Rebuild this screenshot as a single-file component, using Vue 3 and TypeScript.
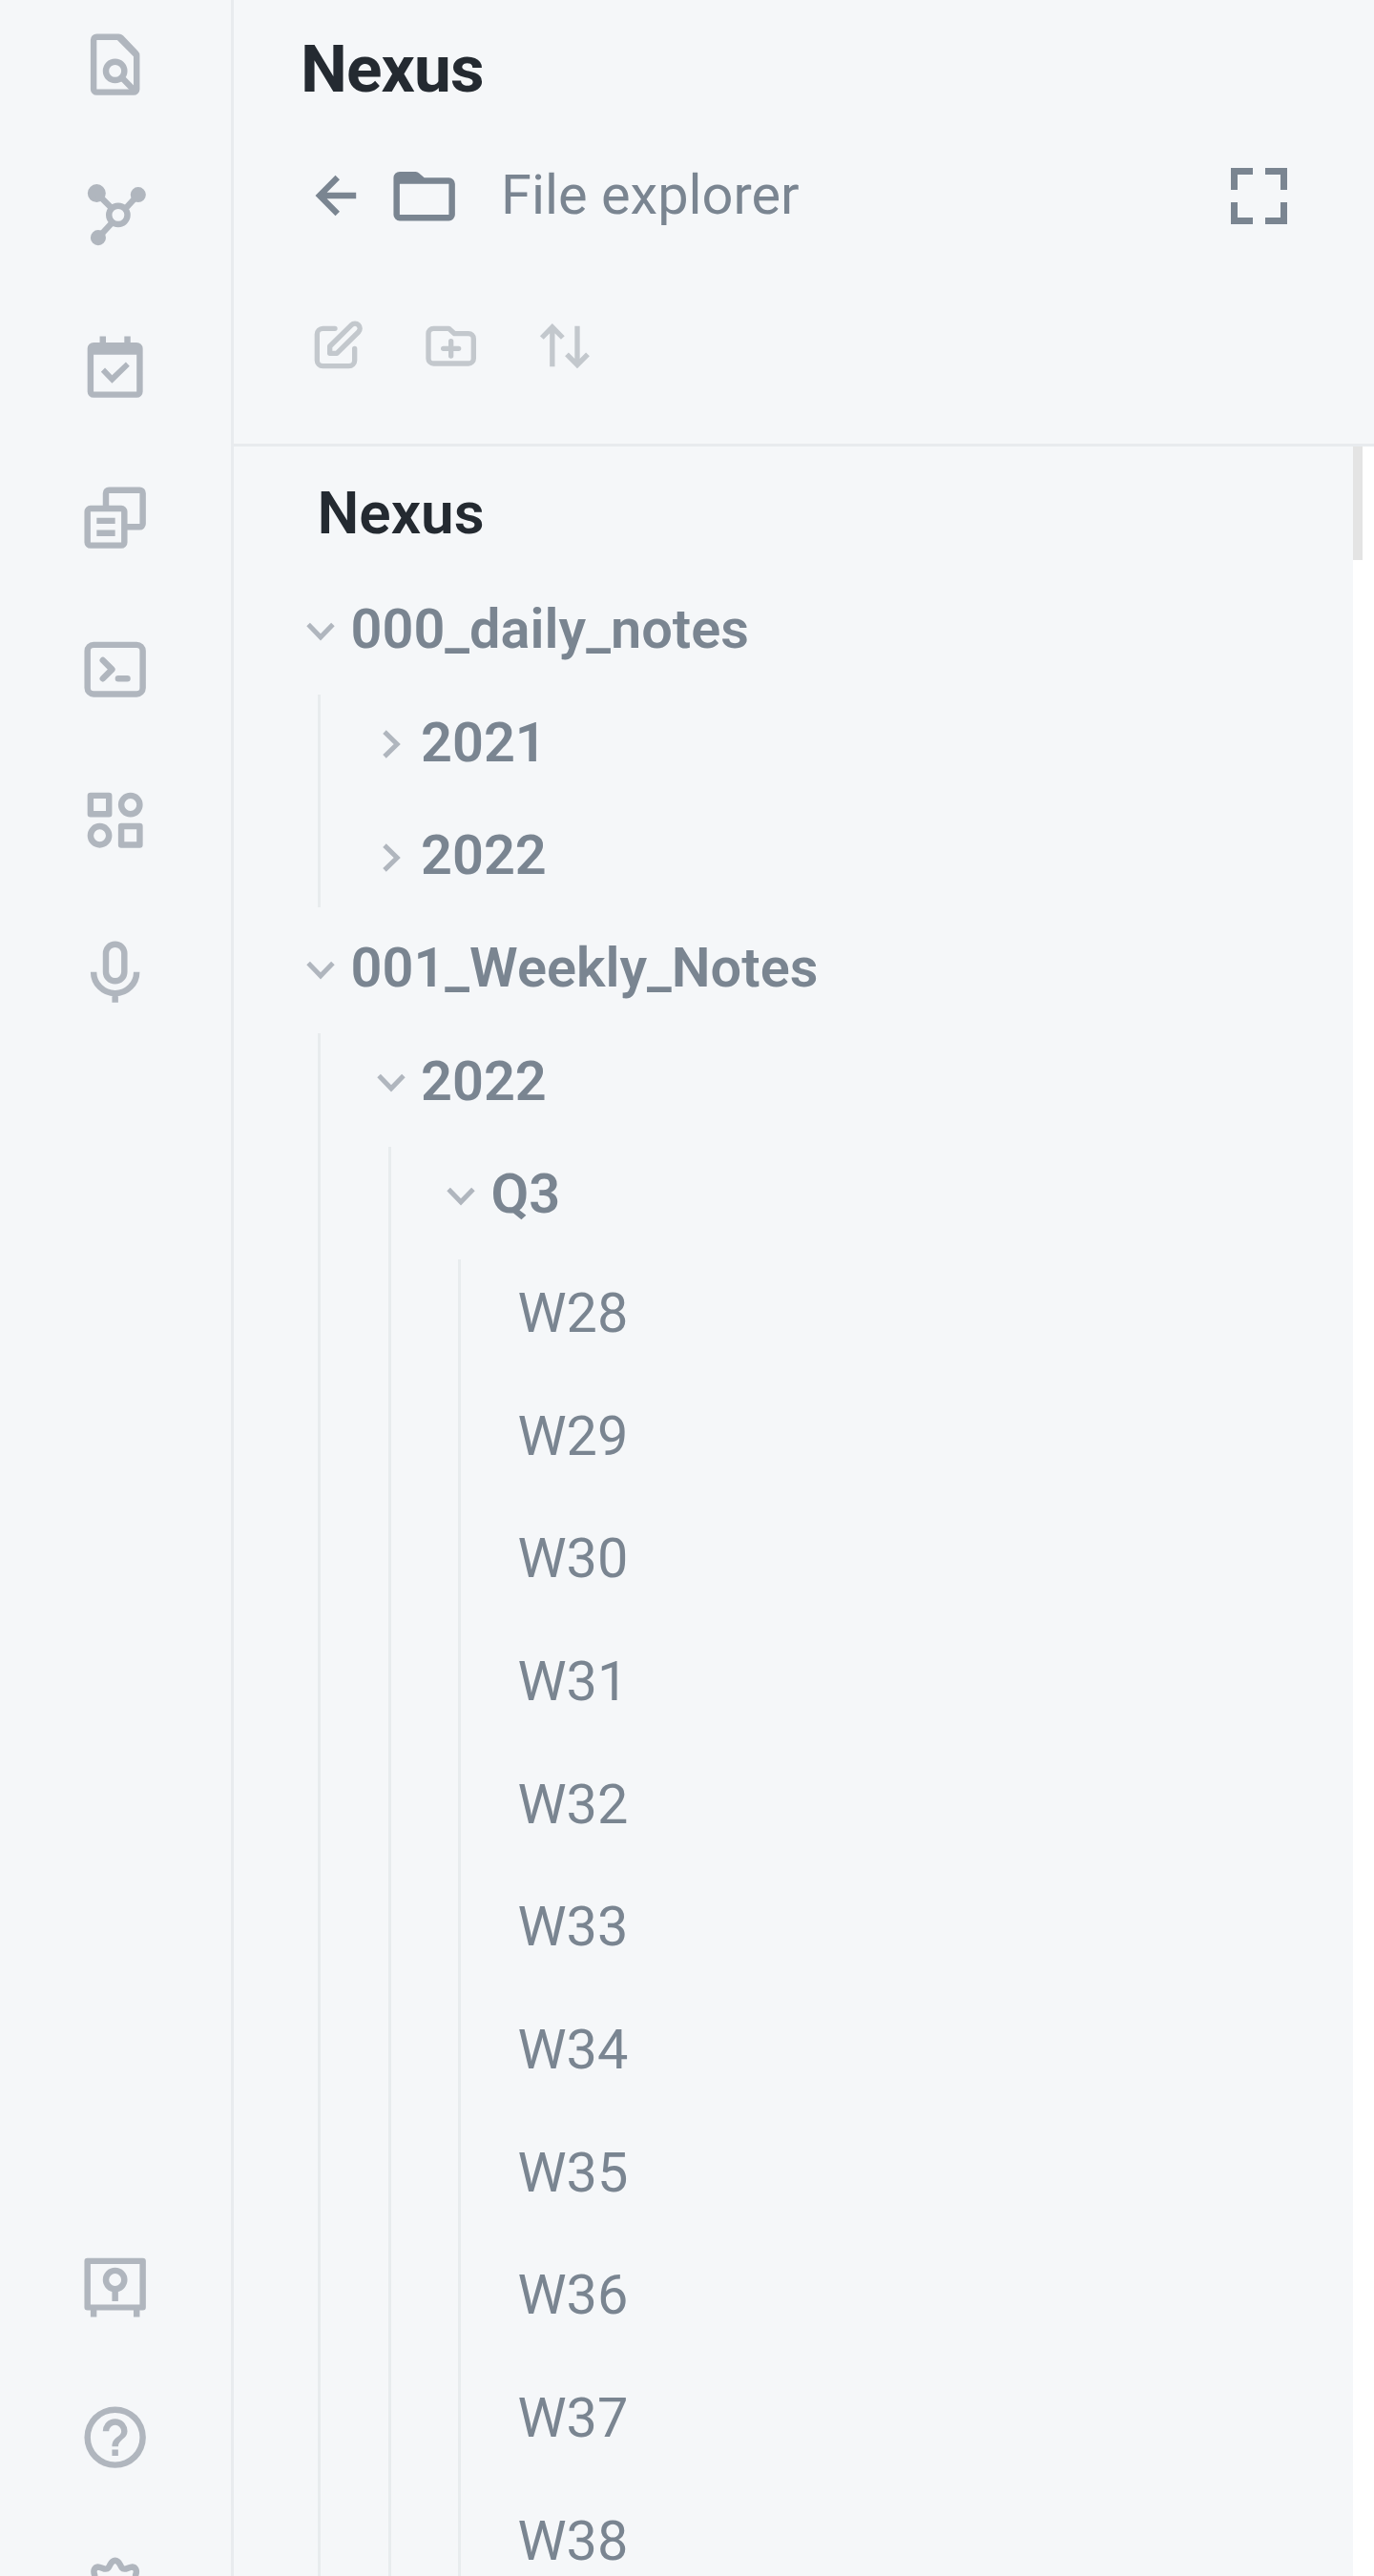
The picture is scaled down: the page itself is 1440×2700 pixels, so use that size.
<script setup lang="ts">
interface RailIcon { id: string; fill?: string; line?: string; round?: boolean }
interface Quarter { name: string; weeks: string[] }
interface Year { name: string; quarters: Quarter[] }
interface Folder { name: string; years: Year[] }

const topIcons: RailIcon[] = [
  {
    id: 'Search in file',
    fill: 'M6 2h7.2a2 2 0 0 1 1.4.6l4.8 5a2 2 0 0 1 .6 1.4V20a2 2 0 0 1-2 2H6a2 2 0 0 1-2-2V4a2 2 0 0 1 2-2zM6 4v16h12V9.4L12.7 4z',
    line: 'M12 11.1a3 3 0 1 0 0 6a3 3 0 0 0 0-6zM14 16.1l4.6 4.7',
  },
  {
    id: 'Graph view',
    fill: 'M6 1.9a2.95 2.95 0 1 0 0 5.9a2.95 2.95 0 0 0 0-5.9zM19.5 2.8a2.5 2.5 0 1 0 0 5a2.5 2.5 0 0 0 0-5zM6.5 16.8a2.5 2.5 0 1 0 0 5a2.5 2.5 0 0 0 0-5z',
    line: 'M13 8.9a3 3 0 1 0 0 6a3 3 0 0 0 0-6zM6 4.8l4.9 4.9M19.500 5.300l-4.500 4.900M6.500 19.300l4.600-5',
  },
  {
    id: 'Daily note',
    fill: 'M19 4h-2V2h-2v2H9V2H7v2H5a2 2 0 0 0-2 2v14a2 2 0 0 0 2 2h14a2 2 0 0 0 2-2V6a2 2 0 0 0-2-2zM19 20H5V8h14zM7.4 13.6l1.3-1.3 2.3 2.4 4.5-4.3 1.2 1.3-5.7 5.6z',
  },
  {
    id: 'Templates',
    fill: 'M10 2h10a2 2 0 0 1 2 2v10a2 2 0 0 1-2 2h-4v4a2 2 0 0 1-2 2H4a2 2 0 0 1-2-2V10a2 2 0 0 1 2-2h4V4a2 2 0 0 1 2-2zM10 4v4h4a2 2 0 0 1 2 2v4h4V4zM4 10v10h10V10zM6 12h6v2H6zM6 16h6v2H6z',
  },
  {
    id: 'Command palette',
    line: 'M5 4h14a2 2 0 0 1 2 2v12a2 2 0 0 1-2 2H5a2 2 0 0 1-2-2V6a2 2 0 0 1 2-2zM8 9l3 3-3 3M13 15h3',
    round: true,
  },
  {
    id: 'Workspaces',
    fill: 'M4 3h6a1 1 0 0 1 1 1v6a1 1 0 0 1-1 1H4a1 1 0 0 1-1-1V4a1 1 0 0 1 1-1zM5 5v4h4V5zM14 13h6a1 1 0 0 1 1 1v6a1 1 0 0 1-1 1h-6a1 1 0 0 1-1-1v-6a1 1 0 0 1 1-1zM15 15v4h4v-4z',
    line: 'M17 4a3 3 0 1 0 0 6a3 3 0 0 0 0-6zM7 14a3 3 0 1 0 0 6a3 3 0 0 0 0-6z',
  },
  {
    id: 'Audio recorder',
    line: 'M12 3a3 3 0 0 1 3 3v6a3 3 0 0 1-6 0V6a3 3 0 0 1 3-3zM5 12a7 7 0 0 0 14 0M12 19v3',
  },
]

const bottomIcons: RailIcon[] = [
  {
    id: 'Open vault',
    fill: 'M3 3h18a1 1 0 0 1 1 1v15a1 1 0 0 1-1 1h-1v2.200h-2v-2.200H6v2.200H4v-2.200H3a1 1 0 0 1-1-1V4a1 1 0 0 1 1-1zM4 5v13.200h16V5zM11 13h2v4.100h-2z',
    line: 'M12 7.100a3 3 0 1 0 0 6a3 3 0 0 0 0-6z',
  },
  {
    id: 'Help',
    fill: 'M11 18h2v-2h-2zM12 2a10 10 0 1 0 0 20a10 10 0 0 0 0-20zM12 20a8 8 0 1 1 0-16a8 8 0 0 1 0 16zM12 6a4 4 0 0 0-4 4h2a2 2 0 0 1 4 0c0 2-3 1.75-3 5h2c0-2.25 3-2.5 3-5a4 4 0 0 0-4-4z',
  },
  {
    id: 'Settings',
    line: 'M12 3C10.6 3 10.5 4.5 9.8 5.4C8.9 6.5 7.7 5.1 6.4 5.1C5.3 5.2 4.8 6.4 5.3 7.6C5.8 9 3.2 9.6 3 12C3.2 14.4 5.8 15 5.3 16.4C4.8 17.6 5.3 18.8 6.4 18.9C7.7 18.9 8.9 17.5 9.8 18.6C10.5 19.5 10.6 21 12 21C13.4 21 13.5 19.5 14.2 18.6C15.1 17.5 16.3 18.9 17.6 18.9C18.7 18.8 19.2 17.6 18.7 16.4C18.2 15 20.8 14.4 21 12C20.8 9.6 18.2 9 18.7 7.6C19.2 6.4 18.7 5.2 17.6 5.1C16.3 5.1 15.1 6.5 14.2 5.4C13.5 4.5 13.4 3 12 3z',
  },
]

const weeks: string[] = Array.from({ length: 11 }, (_, i) => `W${28 + i}`)

const folders: Folder[] = [
  { name: '000_daily_notes', years: [{ name: '2021', quarters: [] }, { name: '2022', quarters: [] }] },
  { name: '001_Weekly_Notes', years: [{ name: '2022', quarters: [{ name: 'Q3', weeks }] }] },
]

const CHEVRON_DOWN = 'M2.1 7.4L15 20.8L27.9 7.4'
const CHEVRON_RIGHT = 'M8 2.1L21.2 15L8 27.9'
</script>

<template>
  <div class="app">
    <nav class="rail">
      <div class="rail-group">
        <svg v-for="icon in topIcons" :key="icon.id" class="rail-icon" viewBox="0 0 24 24" :aria-label="icon.id">
          <path v-if="icon.fill" class="fill" :d="icon.fill" />
          <path v-if="icon.line" class="line" :class="{ round: icon.round }" :d="icon.line" />
        </svg>
      </div>
      <div class="rail-group bottom">
        <svg v-for="icon in bottomIcons" :key="icon.id" class="rail-icon" viewBox="0 0 24 24" :aria-label="icon.id">
          <path v-if="icon.fill" class="fill" :d="icon.fill" />
          <path v-if="icon.line" class="line" :d="icon.line" />
        </svg>
      </div>
    </nav>

    <main class="panel">
      <header class="header">
        <h1 class="title">Nexus</h1>
        <div class="view-bar">
          <svg class="glyph back" viewBox="0 0 44 44"><path d="M.5 22L21.5.7L26 5.2L12.6 18.7H43.2V25.3H12.6L26 38.8L21.5 43.3z" /></svg>
          <svg class="glyph folder-icon" viewBox="0 0 24 24"><path fill-rule="evenodd" d="M4 4h5.2a1.5 1.5 0 0 1 1.1.5L12 6h8a2 2 0 0 1 2 2v10a2 2 0 0 1-2 2H4a2 2 0 0 1-2-2V6a2 2 0 0 1 2-2zM4 8v10h16V8z" /></svg>
          <span class="view-name">File explorer</span>
          <svg class="glyph fullscreen" viewBox="0 0 59 59"><path d="M0 0H23V7H7V23H0zM36 0H59V23H52V7H36zM0 36H7V52H23V59H0zM52 36H59V59H36V52H52z" /></svg>
        </div>
        <div class="toolbar">
          <svg class="tool" viewBox="81 77 160 160"><path d="M153 102H115a18 18 0 0 0-18 18v82a18 18 0 0 0 18 18h82a18 18 0 0 0 18-18v-37M205 91L137 158V180H159L227 113a15.5 15.5 0 0 0-22-22z" /></svg>
          <svg class="tool" viewBox="438 77 160 160"><path d="M463 102H511L529 118H573a16 16 0 0 1 16 16v62a16 16 0 0 1-16 16H463a16 16 0 0 1-16-16V118a16 16 0 0 1 16-16zM518 142V188M494 165H542" /></svg>
          <svg class="tool sharp" viewBox="794 77 160 160"><path d="M835.5 222V98M802.5 131L835.5 97.5L868.5 131M914 94V216M881 183L914 216.5L947 183" /></svg>
        </div>
      </header>

      <div class="body">
        <section class="tree">
          <h2 class="root">Nexus</h2>
          <div class="level">
            <template v-for="folder in folders" :key="folder.name">
              <div class="row">
                <svg class="chevron" viewBox="0 0 30 30"><path :d="CHEVRON_DOWN" /></svg>
                <span class="label">{{ folder.name }}</span>
              </div>
              <div class="level children">
                <template v-for="year in folder.years" :key="year.name">
                  <div class="row">
                    <svg class="chevron" viewBox="0 0 30 30"><path :d="year.quarters.length ? CHEVRON_DOWN : CHEVRON_RIGHT" /></svg>
                    <span class="label">{{ year.name }}</span>
                  </div>
                  <div v-if="year.quarters.length" class="level children">
                    <template v-for="quarter in year.quarters" :key="quarter.name">
                      <div class="row">
                        <svg class="chevron" viewBox="0 0 30 30"><path :d="CHEVRON_DOWN" /></svg>
                        <span class="label">{{ quarter.name }}</span>
                      </div>
                      <div class="level children">
                        <div v-for="week in quarter.weeks" :key="week" class="file">{{ week }}</div>
                      </div>
                    </template>
                  </div>
                </template>
              </div>
            </template>
          </div>
        </section>
        <div class="scroll-track"><div class="scroll-thumb"></div></div>
      </div>
    </main>
  </div>
</template>

<style>
body {
  margin: 0;
  background: #ffffff;
}
</style>

<style scoped>
.app {
  display: flex;
  width: 1440px;
  height: 2700px;
  overflow: hidden;
  background: #f5f7f9;
  font-family: Roboto, "Liberation Sans", sans-serif;
  color: #7a8591;
}

.rail {
  box-sizing: border-box;
  display: flex;
  flex: none;
  flex-direction: column;
  align-items: center;
  width: 245px;
  padding: 28.6px 1px 0 0;
  border-right: 3px solid #e8ebee;
}

.rail-group {
  display: flex;
  flex: none;
  flex-direction: column;
  gap: 81.2px;
}

.rail-group.bottom {
  margin-top: 1300.7px;
}

.rail-icon {
  display: block;
  width: 77.3px;
  height: 77.3px;
}

.fill {
  fill: #b0b6be;
  fill-rule: evenodd;
}

.line {
  fill: none;
  stroke: #b0b6be;
  stroke-width: 2;
}

.round {
  stroke-linecap: round;
  stroke-linejoin: round;
}

.panel {
  display: flex;
  flex: 1;
  flex-direction: column;
  min-width: 0;
}

.header {
  box-sizing: border-box;
  flex: none;
  height: 468px;
  padding: 33px 91.3px 0 70px;
  border-bottom: 3px solid #e8ebee;
}

.title {
  margin: 0;
  font-size: 69.3px;
  line-height: 80px;
  font-weight: 700;
  letter-spacing: -0.85px;
  color: #242a31;
}

.view-bar {
  display: flex;
  align-items: center;
  height: 78px;
  margin-top: 53.3px;
  padding-left: 14.5px;
}

.glyph {
  display: block;
  flex: none;
  fill: #7a8591;
}

.back {
  width: 44px;
  height: 44px;
}

.folder-icon {
  width: 77.3px;
  height: 77.3px;
  margin-left: 32.3px;
}

.view-name {
  margin-left: 42px;
  padding-bottom: 2.6px;
  font-size: 57.7px;
  line-height: 68px;
}

.fullscreen {
  width: 59px;
  height: 59px;
  margin-left: auto;
}

.toolbar {
  display: flex;
  gap: 65.5px;
  margin-top: 91.4px;
  padding-left: 12px;
}

.tool {
  display: block;
  flex: none;
  width: 53.333px;
  height: 53.333px;
  fill: none;
  stroke: #c3c8cd;
  stroke-width: 16;
  stroke-linecap: round;
  stroke-linejoin: round;
}

.tool.sharp {
  stroke-linecap: butt;
  stroke-linejoin: miter;
}

.body {
  display: flex;
  flex: 1;
  min-height: 0;
}

.tree {
  box-sizing: border-box;
  flex: 1;
  padding: 32px 0 0 76px;
}

.root {
  margin: 0;
  padding: 0 0 34.6px 11.5px;
  font-size: 62px;
  line-height: 75px;
  font-weight: 600;
  color: #242a31;
}

.level {
  display: flex;
  flex-direction: column;
  gap: 14.1px;
}

.children {
  margin-left: 12px;
  padding-left: 58.5px;
  border-left: 3px solid #e8ecee;
}

.row {
  display: flex;
  align-items: center;
  height: 104.3px;
}

.chevron {
  flex: none;
  width: 30px;
  height: 30px;
  fill: none;
  stroke: #b0b6be;
  stroke-width: 5;
}

.label {
  margin-left: 16.5px;
  padding-bottom: 5.2px;
  font-size: 57.7px;
  line-height: 68px;
  font-weight: 600;
}

.file {
  padding-left: 1px;
  font-size: 57.6px;
  line-height: 114.6px;
}

.scroll-track {
  flex: none;
  width: 22px;
  background: #ffffff;
}

.scroll-thumb {
  width: 10px;
  height: 119px;
  background: #e4e4e4;
}
</style>
